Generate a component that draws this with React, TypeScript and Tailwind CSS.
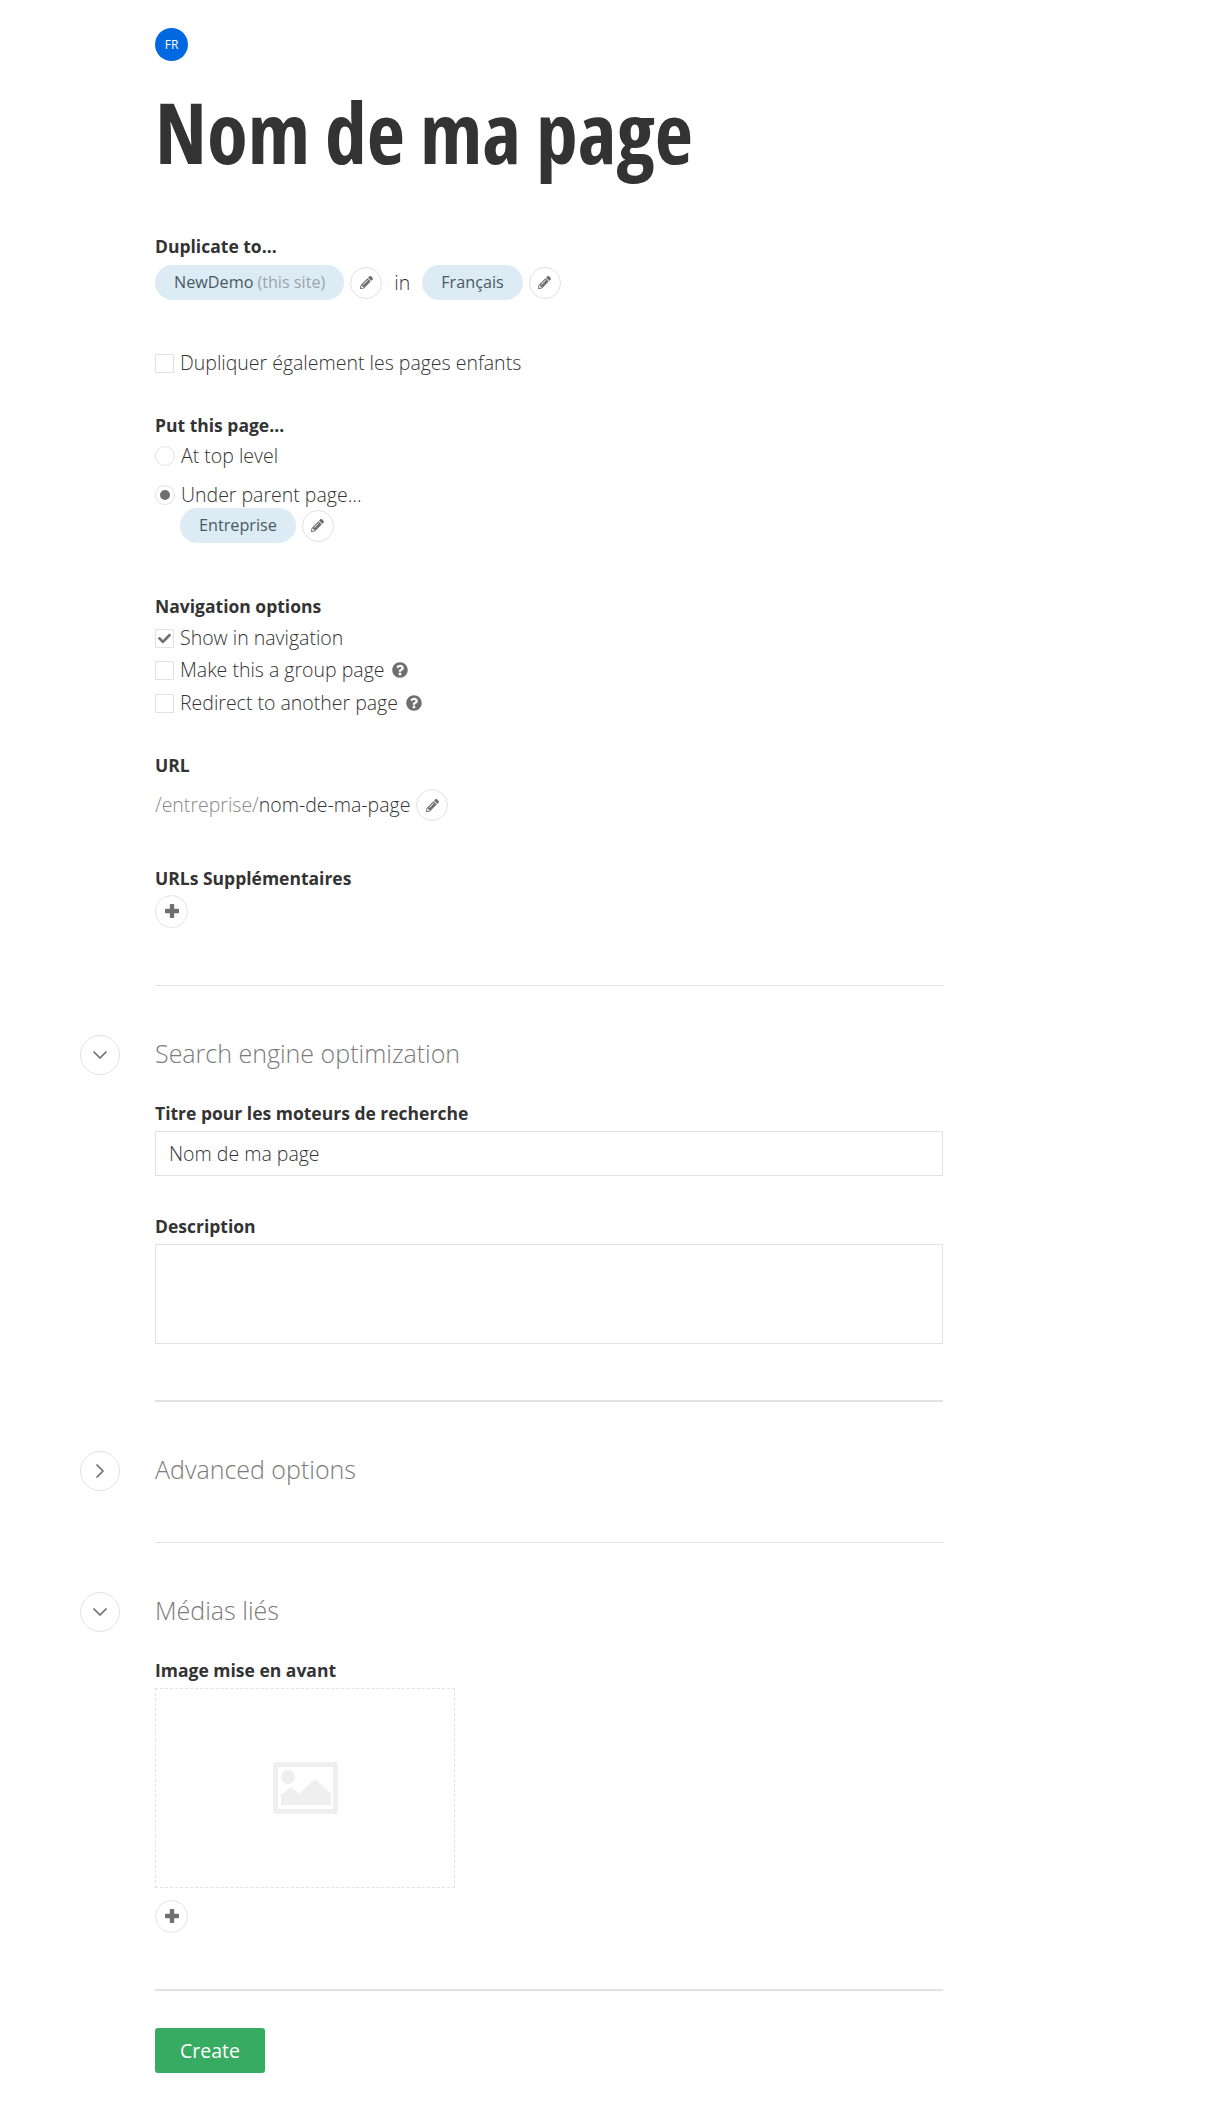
import React from 'react';
import { FaPencilAlt, FaQuestionCircle, FaCheck } from 'react-icons/fa';
import { ChevronDown, ChevronRight } from 'lucide-react';

const EditButton = () => (
  <button className="flex h-8 w-8 shrink-0 items-center justify-center rounded-full border border-[#e2e2e2] bg-white text-[#6f6f6f]">
    <FaPencilAlt className="h-[13px] w-[13px]" />
  </button>
);

const AddButton = () => (
  <button className="flex h-[33px] w-[33px] items-center justify-center rounded-full border border-[#e2e2e2] bg-white">
    <svg viewBox="0 0 14 14" className="-mt-[2px] h-[14px] w-[14px]" fill="#6f6f6f">
      <rect x="4.8" width="4.4" height="14" rx="0.8" />
      <rect y="4.8" width="14" height="4.4" rx="0.8" />
    </svg>
  </button>
);

const Pill = ({ children }: { children: React.ReactNode }) => (
  <span className="flex h-[35px] items-center rounded-full bg-[#dcebf4] px-[19px] text-[16.2px] font-normal text-[#4a5a63]">
    {children}
  </span>
);

const Label = ({ children, className = '' }: { children: React.ReactNode; className?: string }) => (
  <div className={`text-[17.5px] leading-6 font-bold text-[#333] ${className}`}>{children}</div>
);

const Checkbox = ({ checked = false, label, help = false }: { checked?: boolean; label: string; help?: boolean }) => (
  <label className="flex h-6 items-center text-[19.5px] font-[340] text-[#333]">
    <span className="mr-[6px] flex h-[19px] w-[19px] items-center justify-center border border-[#e2e2e2] text-[#6f6f6f]">
      {checked && <FaCheck className="h-[13px] w-[13px]" />}
    </span>
    {label}
    {help && <FaQuestionCircle className="ml-2 h-4 w-4 text-[#6f6f6f]" />}
  </label>
);

const Radio = ({ checked = false, label }: { checked?: boolean; label: string }) => (
  <label className="flex h-6 items-center text-[19.5px] font-[340] text-[#333]">
    <span className="mr-[6px] flex h-5 w-5 items-center justify-center rounded-full border border-[#e2e2e2]">
      {checked && <span className="h-[10px] w-[10px] rounded-full bg-[#6f6f6f]" />}
    </span>
    {label}
  </label>
);

const SectionHead = ({ title, open }: { title: string; open: boolean }) => (
  <div className="relative flex h-10 items-center">
    <button className="absolute left-[-75px] flex h-10 w-10 items-center justify-center rounded-full border border-[#e2e2e2] text-[#6f6f6f]">
      {open ? <ChevronDown className="h-6 w-6" strokeWidth={1.75} /> : <ChevronRight className="h-6 w-6" strokeWidth={1.75} />}
    </button>
    <h2 className="-mt-[2px] text-[25px] font-light text-[#7a7a7a]">{title}</h2>
  </div>
);

export default function App() {
  return (
    <div className="min-h-[2102px] bg-white pl-[155px] font-['Open_Sans',sans-serif] text-[#333]">
      <div className="w-[788px] pt-[28px]">
        <div className="flex h-[33px] w-[33px] items-center justify-center rounded-full bg-[#0069e0] text-[12px] font-normal text-white">
          FR
        </div>
        <h1 className="mt-[21px] text-[83.5px] leading-[100px] font-bold text-[#333] font-stretch-condensed">Nom de ma page</h1>

        <Label className="mt-[52px]">Duplicate to...</Label>
        <div className="mt-[7px] flex items-center">
          <Pill>
            NewDemo<span className="ml-1 text-[#9aa5ab]">(this site)</span>
          </Pill>
          <span className="ml-[6px]"><EditButton /></span>
          <span className="mx-3 text-[19.5px] font-[340]">in</span>
          <Pill>Français</Pill>
          <span className="ml-[6px]"><EditButton /></span>
        </div>

        <div className="mt-[51px]">
          <Checkbox label="Dupliquer également les pages enfants" />
        </div>

        <Label className="mt-[38px]">Put this page...</Label>
        <div className="mt-[7px] flex flex-col gap-[15px]">
          <Radio label="At top level" />
          <Radio checked label="Under parent page..." />
        </div>
        <div className="mt-[1px] ml-[25px] flex items-center gap-[6px]">
          <Pill>Entreprise</Pill>
          <EditButton />
        </div>

        <Label className="mt-[51px]">Navigation options</Label>
        <div className="mt-[8px] flex flex-col gap-2">
          <Checkbox checked label="Show in navigation" />
          <Checkbox help label="Make this a group page" />
          <div className="mt-[1px]"><Checkbox help label="Redirect to another page" /></div>
        </div>

        <Label className="mt-[38px]">URL</Label>
        <div className="mt-[12px] flex h-8 items-center text-[19.5px] font-[340]">
          <span className="text-[#888]">/entreprise/</span>
          <span>nom-de-ma-page</span>
          <span className="ml-[6px]"><EditButton /></span>
        </div>

        <Label className="mt-[45px]">URLs Supplémentaires</Label>
        <div className="mt-[5px]"><AddButton /></div>

        <div className="mt-[57px] border-t border-[#e2e2e2]" />

        <div className="mt-[49px]"><SectionHead open title="Search engine optimization" /></div>
        <Label className="mt-[26px]">Titre pour les moteurs de recherche</Label>
        <input
          readOnly
          value="Nom de ma page"
          className="mt-[6px] block h-[45px] w-full border border-[#e2e2e2] px-[13px] text-[19.5px] font-[340] text-[#333] outline-none"
        />
        <Label className="mt-[38px]">Description</Label>
        <textarea readOnly className="mt-[6px] block h-[100px] w-full resize-none border border-[#e2e2e2] outline-none" />

        <div className="mt-[56px] border-t-2 border-[#e2e2e2]" />

        <div className="mt-[49px]"><SectionHead open={false} title="Advanced options" /></div>

        <div className="mt-[51px] border-t border-[#e2e2e2]" />

        <div className="mt-[49px]"><SectionHead open title="Médias liés" /></div>
        <Label className="mt-[26px]">Image mise en avant</Label>
        <div className="mt-[6px] flex h-[200px] w-[300px] items-center justify-center border border-dashed border-[#e2e2e2]">
          <svg viewBox="0 0 65 52" className="h-[52px] w-[65px]" fill="#efefef">
            <path fillRule="evenodd" d="M4 0h57a4 4 0 0 1 4 4v44a4 4 0 0 1-4 4H4a4 4 0 0 1-4-4V4a4 4 0 0 1 4-4zm1 5v42h55V5H5z" />
            <circle cx="15" cy="15" r="7" />
            <path d="M8 43V33l10-8 8 7 16-15 16 15v11z" />
          </svg>
        </div>
        <div className="mt-[12px]"><AddButton /></div>

        <div className="mt-[56px] border-t-2 border-[#e2e2e2]" />

        <button className="mt-[37px] h-[45px] w-[110px] rounded-[3px] bg-[#38ab62] text-[19.5px] font-normal text-white">
          Create
        </button>
      </div>
    </div>
  );
}
